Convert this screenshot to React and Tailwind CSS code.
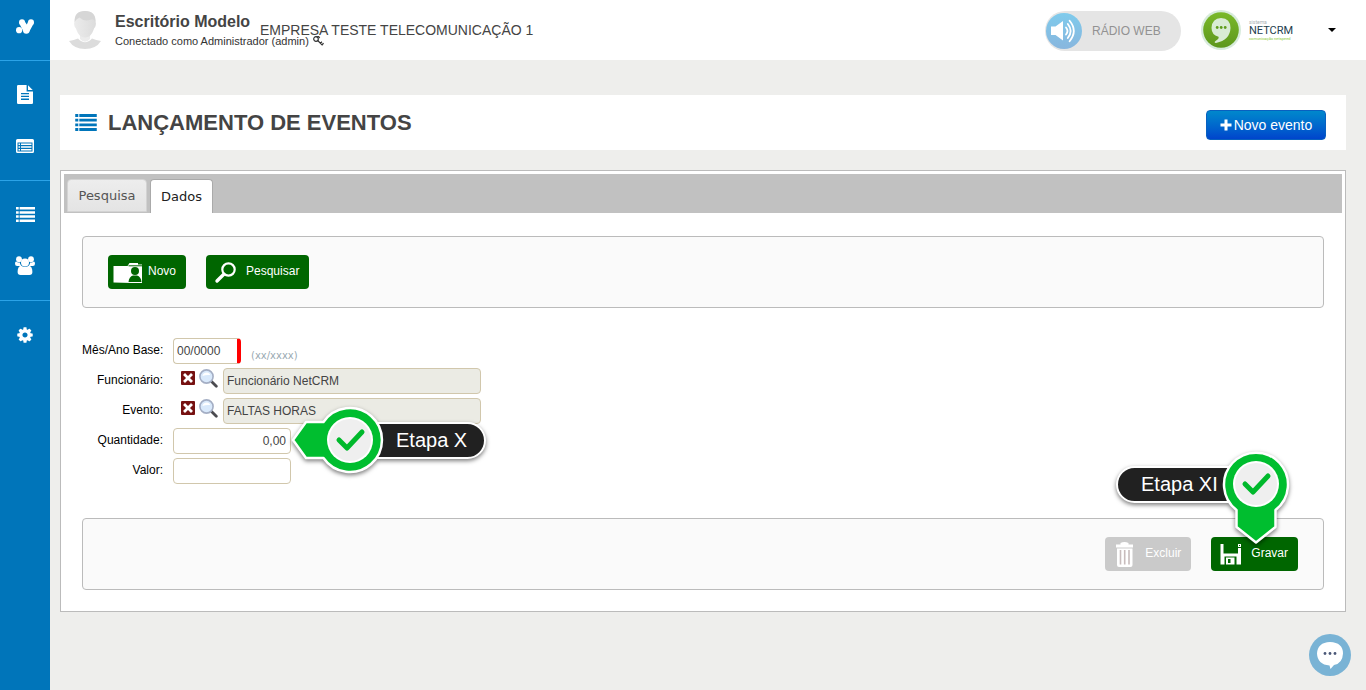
import React from "react";

function Glyph({ w, h, children }) {
  return (
    <svg width={w} height={h} viewBox={`0 0 ${w} ${h}`} fill="currentColor" aria-hidden="true">
      {children}
    </svg>
  );
}

function BrandIcon() {
  return (
    <Glyph w={18} h={15}>
      <circle cx="3.100" cy="11.200" r="3.100" />
      <circle cx="6" cy="3.200" r="3" />
      <circle cx="15" cy="3.200" r="3" />
      <circle cx="10.300" cy="11.500" r="3.200" />
      <path d="M3.300 4.500L8.600 2.200L10.800 5.600L12.200 2.400L17.700 4.500L13.200 12.800H7.600Z" />
    </Glyph>
  );
}

function DocIcon() {
  return (
    <Glyph w={16} h={19}>
      <path fillRule="evenodd" d="M1.200 0H9.600V6.400H16V17.800Q16 19 14.800 19H1.200Q0 19 0 17.800V1.200Q0 0 1.200 0ZM4 8V9.300H12V8ZM4 10.800V12.100H12V10.800ZM4 13.600V14.900H12V13.600Z" />
      <path d="M11 0.300L15.700 5H11Z" />
    </Glyph>
  );
}

function CardIcon() {
  return (
    <Glyph w={18} h={14}>
      <path fillRule="evenodd" d="M1.500 0H16.500Q18 0 18 1.500V12.500Q18 14 16.500 14H1.500Q0 14 0 12.500V1.500Q0 0 1.500 0ZM1.500 3.500V12.500H16.500V3.500Z" />
      <path d="M2.500 4.500h1.500v1.500H2.500zM5 4.500h10.500v1.500H5zM2.500 7.200h1.500v1.500H2.500zM5 7.200h10.500v1.500H5zM2.500 10h1.500v1.500H2.500zM5 10h10.500v1.500H5z" />
    </Glyph>
  );
}

function ListIcon({ w = 19, h = 15 }) {
  return (
    <svg width={w} height={h} viewBox="0 0 19 15" fill="currentColor" aria-hidden="true">
      <path d="M0 0h2.700v2.550H0zM3.600 0h15.400v2.550H3.600zM0 4.150h2.700v2.550H0zM3.600 4.150h15.400v2.550H3.600zM0 8.300h2.700v2.550H0zM3.600 8.300h15.400v2.550H3.600zM0 12.450h2.700v2.550H0zM3.600 12.450h15.400v2.550H3.600z" />
    </svg>
  );
}

function UsersIcon() {
  return (
    <Glyph w={20} h={19}>
      <circle cx="4" cy="3.200" r="2.900" />
      <circle cx="16" cy="3.200" r="2.900" />
      <path d="M4.700 6.200Q5 8.600 6.400 10H2.200Q0 10 0 7.800Q0 5.400 1.200 5.400Q3 6.900 4.700 6.200ZM15.300 6.200Q15 8.600 13.600 10H17.800Q20 10 20 7.800Q20 5.400 18.800 5.400Q17 6.900 15.300 6.200Z" />
      <circle cx="10" cy="6.600" r="4" />
      <path d="M6.200 9.800Q10 12.200 13.800 9.800Q17.400 10.300 17.400 16Q17.400 19 14.400 19H5.600Q2.600 19 2.600 16Q2.600 10.300 6.200 9.800Z" />
    </Glyph>
  );
}

function CogIcon() {
  return (
    <svg width="16" height="18" viewBox="0 0 1536 1792" fill="currentColor" aria-hidden="true">
      <path d="M1024 896q0-106-75-181t-181-75-181 75-75 181 75 181 181 75 181-75 75-181zm512-109v222q0 12-8 23t-20 13l-185 28q-19 54-39 91 35 50 107 138 10 12 10 25t-9 23q-27 37-99 108t-94 71q-12 0-26-9l-138-108q-44 23-91 38-16 136-29 186-7 28-36 28h-222q-14 0-24.500-8.500t-11.500-21.500l-28-184q-49-16-90-37l-141 107q-10 9-25 9-14 0-25-11-126-114-165-168-7-10-7-23 0-12 8-23 15-21 51-66.500t54-70.500q-27-50-41-99l-183-27q-13-2-21-12.500t-8-23.500v-222q0-12 8-23t19-13l186-28q14-46 39-92-40-57-107-138-10-12-10-24 0-10 9-23 26-36 98.500-107.500t94.500-71.500q13 0 26 10l138 107q44-23 91-38 16-136 29-186 7-28 36-28h222q14 0 24.500 8.500t11.500 21.500l28 184q49 16 90 37l142-107q9-9 24-9 13 0 25 10 129 119 165 170 7 8 7 22 0 12-8 23-15 21-51 66.500t-54 70.500q26 50 41 98l183 28q13 2 21 12.500t8 23.500z" />
    </svg>
  );
}

function SideLink({ label, children }) {
  return (
    <a href="#" aria-label={label} className="flex h-[51px] items-center justify-center">
      {children}
    </a>
  );
}

function Sidebar() {
  return (
    <aside className="w-[50px] shrink-0 bg-[#0075ba] text-white">
      <a href="#" aria-label="Início" className="flex h-[60px] items-center justify-center pb-2">
        <BrandIcon />
      </a>
      <nav>
        <div className="h-[120px] border-t border-[#2ba3e8] pt-2">
          <SideLink label="Documentos"><DocIcon /></SideLink>
          <SideLink label="Cadastros"><CardIcon /></SideLink>
        </div>
        <div className="h-[120px] border-t border-[#2ba3e8] pt-2">
          <SideLink label="Listas"><ListIcon /></SideLink>
          <SideLink label="Usuários"><UsersIcon /></SideLink>
        </div>
        <div className="border-t border-[#2ba3e8] pt-2">
          <SideLink label="Configurações"><CogIcon /></SideLink>
        </div>
      </nav>
    </aside>
  );
}

function Avatar() {
  return (
    <svg width="32" height="40" viewBox="0 0 32 40" className="shrink-0" aria-hidden="true">
      <defs>
        <linearGradient id="skin" x1="0" y1="0" x2="1" y2="0">
          <stop offset="0" stopColor="#ececec" />
          <stop offset="1" stopColor="#dcdcdc" />
        </linearGradient>
      </defs>
      <path d="M0 31Q5 30 9 28.500Q16 36 23 28.500Q27 30 32 31Q27 39 16 39Q5 39 0 31Z" fill="#dcdcdc" />
      <path d="M11 24H21V29Q16 34.500 11 29Z" fill="#ececec" />
      <path d="M5.500 12Q6 1 16 1Q26 1 26.500 12Q27.500 13 26.200 17Q25 18 24.500 20Q22 27.500 16 27.500Q10 27.500 7.500 20Q7 18 5.800 17Q4.500 13 5.500 12Z" fill="url(#skin)" />
      <path d="M5.600 12Q5 1 16 1Q27 1 26.500 12Q25 8.500 22 9.500Q15 12 10.500 7.500Q7 9 5.600 12Z" fill="#d6d6d6" />
    </svg>
  );
}

function KeyIcon() {
  return (
    <svg width="11" height="11" viewBox="0 0 11 11" fill="none" stroke="#333" strokeWidth="1.200" aria-hidden="true">
      <circle cx="3" cy="4" r="2.300" />
      <path d="M3.600 2.200Q6 0.500 6.600 3.200M4.700 5.500L9.500 10.300M7.400 8.200L9 6.800M9 9.800L10.600 8.300" />
    </svg>
  );
}

function RadioButton() {
  return (
    <button type="button" className="mt-[2px] flex h-10 w-[136px] items-center rounded-full bg-[#e5e5e5] text-[12px] text-[#929292]">
      <svg width="38" height="38" viewBox="0 0 38 38" aria-hidden="true">
        <defs>
          <linearGradient id="radio" x1="0" y1="0" x2="0" y2="1">
            <stop offset="0" stopColor="#7fcbec" />
            <stop offset="1" stopColor="#88b6de" />
          </linearGradient>
        </defs>
        <circle cx="19" cy="19" r="18" fill="url(#radio)" />
        <path d="M6 14.500H10.500L18 9V28.500L10.500 23H6Z" fill="#fff" />
        <g fill="none" stroke="#fff" strokeWidth="1.800" strokeLinecap="round">
          <path d="M21 15.500Q24 19 21 22.500M22.800 12Q28.500 19 22.800 26M24.600 8.800Q33 19 24.600 29.200" />
        </g>
      </svg>
      <span className="pl-[9px]">RÁDIO WEB</span>
    </button>
  );
}

function NetcrmLogo() {
  return (
    <div className="flex items-center gap-2">
      <svg width="40" height="40" viewBox="0 0 40 40" aria-hidden="true">
        <defs>
          <linearGradient id="crm" x1="0" y1="0" x2="0" y2="1">
            <stop offset="0" stopColor="#7ab929" />
            <stop offset="1" stopColor="#5d971c" />
          </linearGradient>
        </defs>
        <circle cx="20" cy="20" r="20" fill="#d7ebdb" />
        <circle cx="20" cy="20" r="17.800" fill="url(#crm)" />
        <path d="M20 8Q29.500 8.500 29.500 18Q29 30 15 33Q12.500 32.500 14.500 31Q18.500 28.500 17.500 26.800Q10.500 25 10.500 17.800Q11 8.500 20 8Z" fill="#d9ecd4" />
        <circle cx="16.200" cy="17.500" r="1.400" fill="#5f9d1c" />
        <circle cx="20.200" cy="17.500" r="1.400" fill="#5f9d1c" />
        <circle cx="24.200" cy="17.500" r="1.400" fill="#5f9d1c" />
      </svg>
      <div className="w-[43px] whitespace-nowrap font-['Roboto',sans-serif]">
        <div className="text-[5px] leading-[5px] text-[#aab2b5]">sistema</div>
        <div className="text-[11px] leading-[11px] text-[#24404e]">NETCRM</div>
        <div className="text-[4px] leading-[5px] text-[#8ccb3c]">comunicação netspeed</div>
      </div>
    </div>
  );
}

function Header() {
  return (
    <header className="flex h-[60px] items-center bg-white pr-[30px] pl-[19px]">
      <div className="flex w-[191px] shrink-0 gap-[14px] whitespace-nowrap">
        <Avatar />
        <div className="pt-[3px] text-[#333]">
          <div className="text-[16px] leading-[18px] font-bold text-[#444]">Escritório Modelo</div>
          <div className="flex items-center gap-1 text-[11px] leading-5">
            Conectado como Administrador (admin)
            <a href="#" aria-label="Alterar senha"><KeyIcon /></a>
          </div>
        </div>
      </div>
      <div className="flex-1 text-[14px] whitespace-nowrap text-[#444]">EMPRESA TESTE TELECOMUNICAÇÃO 1</div>
      <RadioButton />
      <div className="ml-5">
        <NetcrmLogo />
      </div>
      <button type="button" aria-label="Abrir menu" className="ml-[36px] text-black">
        <Glyph w={8} h={4}><path d="M0 0H8L4 4Z" /></Glyph>
      </button>
    </header>
  );
}

function ActionButton({ label, icon, disabled }) {
  const tone = disabled ? "bg-[#cacaca]" : "bg-[#006600]";
  return (
    <button type="button" disabled={disabled} className={`flex h-[34px] items-center rounded pr-[10px] text-[12px] text-white ${tone}`}>
      <svg width="40" height="34" viewBox="0 0 40 34" fill="#fff" aria-hidden="true">{icon}</svg>
      <span className="pb-[2px]">{label}</span>
    </button>
  );
}

const folderIcon = (
  <>
    <path d="M5.500 11H19.500L21.500 8H30V9.500H34V28H24L5.500 27.500Z" />
    <path d="M20.500 10.800H34" stroke="#006600" strokeWidth="1" />
    <circle cx="27" cy="16" r="4" fill="#006600" />
    <path d="M20.500 27Q21 21.500 25 20.500H29Q33 21.500 33.500 27Z" fill="#006600" />
  </>
);

const searchIcon = (
  <g fill="none" stroke="#fff">
    <circle cx="22.500" cy="14.500" r="6.200" strokeWidth="2.200" />
    <path d="M17.800 19.200L11 26" strokeWidth="3.400" strokeLinecap="round" />
  </g>
);

const trashIcon = (
  <>
    <path d="M15.500 6Q19.500 4 23.500 6V7.500H28V10.500H11V7.500H15.500Z" />
    <path d="M12 11.500H27.500V28Q27.500 30 25.500 30H14Q12 30 12 28Z" />
    <path d="M15.500 13V27.500M19.700 13V27.500M24 13V27.500" stroke="#c8bcbc" strokeWidth="1.600" />
  </>
);

const saveIcon = (
  <>
    <path d="M9.500 7H12.500V16.500H27V11H30V27.500H25.500V19.500H13.500V27.500H9.500Z" />
    <path fillRule="evenodd" d="M15 20.500H23.500V27.500H15ZM17 22V26H19.500V22Z" />
    <path fillRule="evenodd" d="M27 7H30V10H27ZM28 8V9H29V8Z" />
  </>
);

function StepCheck({ cx, cy }) {
  return (
    <>
      <circle cx={cx} cy={cy} r="23" fill="#fff" />
      <circle cx={cx} cy={cy} r="21" fill="#efefef" />
      <path d={`M${cx - 11} ${cy}L${cx - 3} ${cy + 8}L${cx + 12} ${cy - 8}`} fill="none" stroke="#00b92c" strokeWidth="5" strokeLinecap="round" strokeLinejoin="round" />
    </>
  );
}

/* Guide balloon whose arrow points left. */
function StepLeft({ label }) {
  return (
    <div className="absolute top-1/2 left-full z-10 -mt-9 h-[74px] w-[198px]">
      <svg width="198" height="74" viewBox="0 0 198 74" className="overflow-visible drop-shadow-[0_2px_2px_rgba(0,0,0,0.5)]" aria-hidden="true">
        <rect x="61" y="18" width="133" height="35" rx="17.500" fill="#212121" stroke="#fff" strokeWidth="2" />
        <path d="M2 35L15 17H32.500A32 32 0 1 1 32.500 53H15Z" fill="#00be2f" stroke="#fff" strokeWidth="2.500" strokeLinejoin="round" />
        <StepCheck cx={59} cy={35} />
      </svg>
      <span className="absolute top-[21px] left-[105px] text-[20px] leading-7 whitespace-nowrap text-white">{label}</span>
    </div>
  );
}

/* Guide balloon whose arrow points down. */
function StepDown({ label }) {
  return (
    <div className="absolute right-[7px] bottom-[27px] z-10 h-[94px] w-[176px]">
      <svg width="176" height="94" viewBox="0 0 176 94" className="overflow-visible drop-shadow-[0_2px_2px_rgba(0,0,0,0.5)]" aria-hidden="true">
        <rect x="2" y="17" width="130" height="35" rx="17.500" fill="#212121" stroke="#fff" strokeWidth="2" />
        <path d="M141 92.500L121.500 77V60A32 32 0 1 1 160.500 60V77Z" fill="#00be2f" stroke="#fff" strokeWidth="2.500" strokeLinejoin="round" />
        <StepCheck cx={141} cy={34} />
      </svg>
      <span className="absolute top-5 left-[26px] text-[20px] leading-7 whitespace-nowrap text-white">{label}</span>
    </div>
  );
}

function FormRow({ id, label, children }) {
  return (
    <div className="flex gap-[10px]">
      <label htmlFor={id} className="w-[81px] pt-1 text-right text-[12px] leading-4 whitespace-nowrap text-black">{label}</label>
      {children}
    </div>
  );
}

const inputBase = "h-[26px] rounded border border-[#d1c7ac] pl-[3px] pr-1 text-[12px] text-[#444] outline-none";

function LookupField({ id, value }) {
  return (
    <div className="flex items-start">
      <button type="button" aria-label="Limpar" className="mt-[3px] ml-2">
        <svg width="14" height="14" viewBox="0 0 14 14" aria-hidden="true">
          <rect width="14" height="14" rx="1" fill="#761111" />
          <path d="M4 4L10 10M10 4L4 10" stroke="#fff" strokeWidth="2.800" strokeLinecap="square" />
        </svg>
      </button>
      <button type="button" aria-label="Procurar" className="mt-px ml-1">
        <svg width="19" height="19" viewBox="0 0 19 19" aria-hidden="true">
          <path d="M12 12L17.300 17.300" stroke="#4b4b50" strokeWidth="2.800" strokeLinecap="round" />
          <circle cx="7.500" cy="7.500" r="6.600" fill="#d9e9fb" stroke="#a4aec4" strokeWidth="1.600" />
          <path d="M3.500 7Q4 3.500 8 3.500Q11 4 11 6Q7 5.500 3.500 7Z" fill="#fff" />
        </svg>
      </button>
      <input id={id} readOnly defaultValue={value} className={`${inputBase} ml-[5px] w-[258px] bg-[#ebebe4]`} />
    </div>
  );
}

export default function App() {
  return (
    <div className="flex min-h-screen bg-[#eeeeec] font-['Liberation_Sans',Arial,sans-serif]">
      <Sidebar />
      <div className="min-w-0 flex-1">
        <Header />
        <main className="pt-[35px] pr-5 pb-10 pl-[10px]">
          <div className="flex h-[55px] items-center justify-between bg-white pr-5 pl-[15px]">
            <h1 className="flex items-center gap-[11px] text-[22px] font-bold text-[#444]">
              <span className="text-[#0075ba]"><ListIcon w={22} h={17} /></span>
              LANÇAMENTO DE EVENTOS
            </h1>
            <button type="button" className="mt-[5px] flex h-[30px] w-[120px] items-center justify-center gap-[2px] rounded border border-[#0860c0] bg-linear-to-b from-[#0088cc] to-[#0044cc] text-[14px] text-white">
              <Glyph w={12} h={12}><path d="M4.500 0.500H7.500V4.500H11.500V7.500H7.500V11.500H4.500V7.500H0.500V4.500H4.500Z" /></Glyph>
              Novo evento
            </button>
          </div>

          <section className="mt-5 border border-[#bbb] bg-white p-[3px]">
            <div role="tablist" className="flex h-[39px] items-end gap-[3px] bg-[#c1c1c1] pl-[3px] font-['DejaVu_Sans',Verdana,sans-serif] text-[13px]">
              <button type="button" role="tab" aria-selected="false" className="mb-px h-[33px] w-20 rounded-t border border-[#d3d3d3] bg-linear-to-b from-[#ededed] to-[#e4e4e4] text-[#555]">Pesquisa</button>
              <button type="button" role="tab" aria-selected="true" className="h-[34px] w-[63px] rounded-t border border-b-0 border-[#aaa] bg-white text-[#212121]">Dados</button>
            </div>

            <div className="px-[18px] pt-[23px] pb-[18px]">
              <div className="flex h-[72px] items-center gap-5 rounded border border-[#bbb] bg-[#fafafa] px-[25px]">
                <ActionButton label="Novo" icon={folderIcon} />
                <ActionButton label="Pesquisar" icon={searchIcon} />
              </div>

              <form className="flex flex-col gap-1 pt-[30px] pb-[34px]">
                <FormRow id="base" label="Mês/Ano Base:">
                  <input id="base" defaultValue="00/0000" className={`${inputBase} w-[68px] border-r-4 border-r-[#f00]`} />
                  <span className="pt-[10px] font-['DejaVu_Sans',Verdana,sans-serif] text-[10px] leading-4 text-[#9aaab2]">(xx/xxxx)</span>
                </FormRow>
                <FormRow id="func" label="Funcionário:">
                  <LookupField id="func" value="Funcionário NetCRM" />
                </FormRow>
                <FormRow id="evento" label="Evento:">
                  <LookupField id="evento" value="FALTAS HORAS" />
                </FormRow>
                <FormRow id="qtd" label="Quantidade:">
                  <div className="relative flex">
                    <input id="qtd" defaultValue="0,00" className={`${inputBase} w-[118px] text-right`} />
                    <StepLeft label="Etapa X" />
                  </div>
                </FormRow>
                <FormRow id="valor" label="Valor:">
                  <input id="valor" className={`${inputBase} w-[118px]`} />
                </FormRow>
              </form>

              <div className="flex h-[72px] items-center justify-end gap-5 rounded border border-[#bbb] bg-[#fafafa] px-[25px]">
                <ActionButton label="Excluir" icon={trashIcon} disabled />
                <div className="relative">
                  <ActionButton label="Gravar" icon={saveIcon} />
                  <StepDown label="Etapa XI" />
                </div>
              </div>
            </div>
          </section>
        </main>
      </div>

      <button type="button" aria-label="Abrir chat" className="fixed right-[15px] bottom-[14px]">
        <svg width="42" height="42" viewBox="0 0 42 42" aria-hidden="true">
          <circle cx="21" cy="21" r="21" fill="#79b3d5" />
          <path d="M21 8Q34 8.500 34 19.500Q33.500 29.500 25 31L21.500 35L20.500 31.500Q8.500 30.500 8 19.500Q8.500 8.500 21 8Z" fill="#fff" />
          <g fill="#4b5878">
            <circle cx="16" cy="19.500" r="1.400" />
            <circle cx="21" cy="19.500" r="1.400" />
            <circle cx="26" cy="19.500" r="1.400" />
          </g>
        </svg>
      </button>
    </div>
  );
}
